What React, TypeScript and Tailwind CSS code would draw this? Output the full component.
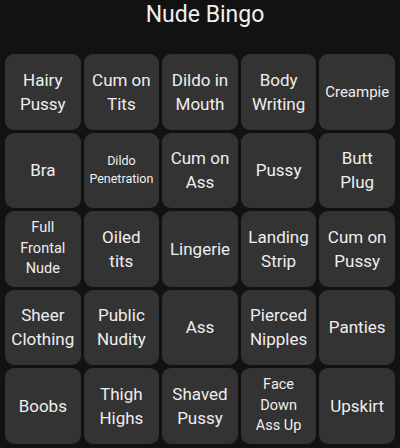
const cells: { label: string; size?: string }[] = [
  { label: "Hairy\nPussy" },
  { label: "Cum on\nTits" },
  { label: "Dildo in\nMouth" },
  { label: "Body\nWriting" },
  { label: "Creampie", size: "text-[15px] leading-[22px]" },
  { label: "Bra" },
  { label: "Dildo\nPenetration", size: "text-[12.5px] leading-[18px]" },
  { label: "Cum on\nAss" },
  { label: "Pussy" },
  { label: "Butt\nPlug" },
  { label: "Full\nFrontal\nNude", size: "text-[14.5px] leading-[20.5px]" },
  { label: "Oiled\ntits" },
  { label: "Lingerie" },
  { label: "Landing\nStrip" },
  { label: "Cum on\nPussy" },
  { label: "Sheer\nClothing" },
  { label: "Public\nNudity" },
  { label: "Ass" },
  { label: "Pierced\nNipples" },
  { label: "Panties" },
  { label: "Boobs" },
  { label: "Thigh\nHighs" },
  { label: "Shaved\nPussy" },
  { label: "Face\nDown\nAss Up", size: "text-[14.5px] leading-[20.5px]" },
  { label: "Upskirt" },
]

export default function App() {
  return (
    <div className="w-[400px] h-[448px] bg-[#121212] text-[#eeeeee] font-['Roboto',sans-serif] overflow-hidden">
      <div className="h-[54px] flex justify-center pt-[1px] pl-[10px]">
        <h1 className="text-[23px] leading-[28px] text-[#f0f0f0]">Nude Bingo</h1>
      </div>
      <div className="grid grid-cols-5 gap-[3px] px-[5px]">
        {cells.map((c) => (
          <div
            key={c.label}
            className="h-[75.5px] rounded-[9px] bg-[#333333] flex items-center justify-center text-center"
          >
            <span className={`whitespace-pre ${c.size ?? "text-[17px] leading-[24px]"}`}>
              {c.label}
            </span>
          </div>
        ))}
      </div>
    </div>
  )
}
